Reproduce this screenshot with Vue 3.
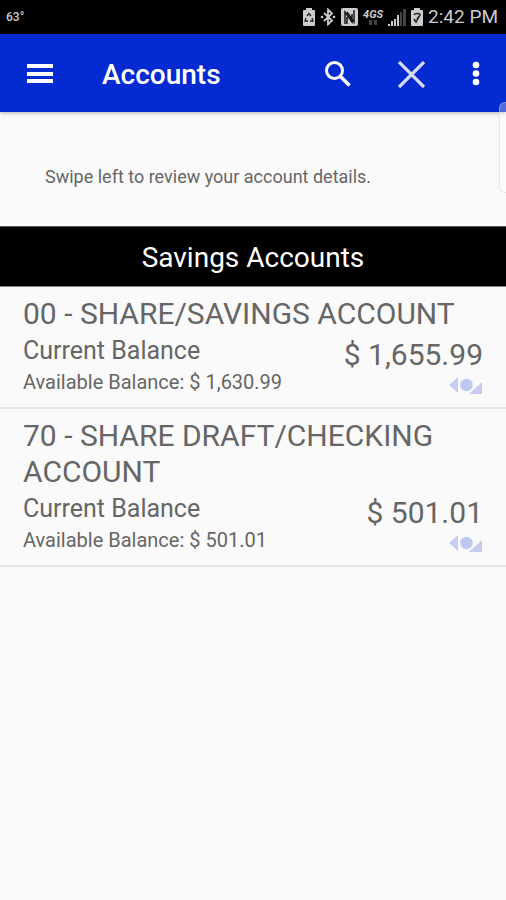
<template>
  <div class="screen">
    <!-- system status bar -->
    <div class="status-bar">
      <span class="temperature">63°</span>
      <div class="status-icons">
        <svg width="12" height="18" viewBox="0 0 12 18">
          <path fill="#ccc" d="M3 2V0h6v2h2a1 1 0 0 1 1 1v14a1 1 0 0 1-1 1H1a1 1 0 0 1-1-1V3a1 1 0 0 1 1-1z" />
          <path fill="none" stroke="#222" stroke-width="1.300" d="M4 8l2-2.500L8 8M3 10l-1 3h3M9 10l1 3H7" />
        </svg>
        <svg width="16" height="18" viewBox="0 0 16 18">
          <path fill="none" stroke="#ccc" stroke-width="1.800" d="M4 5l8 7.500L8 16.500V1.500l4 4L4 13" />
          <circle cx="2" cy="9" r="1.300" fill="#ccc" />
          <circle cx="14" cy="9" r="1.300" fill="#ccc" />
        </svg>
        <svg width="17" height="18" viewBox="0 0 17 18">
          <rect width="17" height="18" rx="2" fill="#ccc" />
          <path fill="none" stroke="#111" stroke-width="1.400" d="M4 16V4l7 10V6M13 2v12L6 4M6 9v7" />
        </svg>
        <div class="network">
          <span class="network-type">4GS</span>
          <svg width="10" height="5" viewBox="0 0 10 5">
            <path fill="#444" d="M1 0h3v5H1zM6 0h3v5H6z" />
          </svg>
        </div>
        <svg width="18" height="18" viewBox="0 0 18 18">
          <path fill="#ccc" d="M0 16h2v2H0zM3 13h2v5H3zM6 11h2v7H6zM9 7h2v11H9z" />
          <path fill="#444" d="M12 4h2v14h-2zM15 1h3v17h-3z" />
        </svg>
        <svg width="12" height="18" viewBox="0 0 12 18">
          <path fill="#ccc" d="M3 2V0h6v2h2a1 1 0 0 1 1 1v14a1 1 0 0 1-1 1H1a1 1 0 0 1-1-1V3a1 1 0 0 1 1-1z" />
          <path fill="none" stroke="#222" stroke-width="1.500" d="M3 7c1-2 6-2 6 0 0 1-1 1-3 4M3 11l2 3 4-7" />
        </svg>
      </div>
      <time class="clock">2:42 PM</time>
    </div>

    <header class="app-bar">
      <button class="icon-btn" aria-label="Menu">
        <svg width="28" height="28" viewBox="0 0 28 28">
          <path fill="currentColor" d="M1 3h26v4H1zM1 11h26v4H1zM1 18h26v4H1z" />
        </svg>
      </button>
      <h1 class="app-title">Accounts</h1>
      <div class="actions">
        <button class="icon-btn" aria-label="Search">
          <svg width="28" height="28" viewBox="0 0 28 28">
            <g fill="none" stroke="currentColor" stroke-width="3">
              <circle cx="10.500" cy="9.500" r="8" />
              <path d="M16 15l9.500 9.500" stroke-width="3.600" />
            </g>
          </svg>
        </button>
        <button class="icon-btn close" aria-label="Close">
          <svg width="28" height="28" viewBox="0 0 28 28">
            <path fill="none" stroke="currentColor" stroke-width="3.200" d="M1 1l25 25M26 1L1 26" />
          </svg>
        </button>
        <button class="icon-btn" aria-label="More options">
          <svg width="8" height="28" viewBox="0 0 8 28">
            <g fill="currentColor">
              <circle cx="4" cy="4" r="3.300" />
              <circle cx="4" cy="12.500" r="3.300" />
              <circle cx="4" cy="21" r="3.300" />
            </g>
          </svg>
        </button>
      </div>
      <div class="edge-handle"></div>
    </header>

    <main>
      <p class="hint">Swipe left to review your account details.</p>
      <h2 class="group-title">Savings Accounts</h2>
      <ul class="accounts">
        <li v-for="account in accounts" :key="account.id" class="account">
          <h3 class="account-name">{{ account.id }} - {{ account.name }}</h3>
          <div class="account-body">
            <div>
              <p class="label">Current Balance</p>
              <p class="available">Available Balance: {{ account.available }}</p>
            </div>
            <div class="amount">
              <p class="balance">{{ account.balance }}</p>
              <svg width="34" height="18" viewBox="0 1 34 18">
                <path fill="#c5cbf1" d="M0 9L9 1v16z" />
                <circle cx="17.500" cy="9" r="6.200" fill="#bfc8f3" />
                <path fill="#c5cbf1" d="M33 6v12H20z" />
              </svg>
            </div>
          </div>
        </li>
      </ul>
    </main>
  </div>
</template>

<script setup>
import { ref } from 'vue'

const accounts = ref([
  {
    id: '00',
    name: 'SHARE/SAVINGS ACCOUNT',
    balance: '$ 1,655.99',
    available: '$ 1,630.99'
  },
  {
    id: '70',
    name: 'SHARE DRAFT/CHECKING ACCOUNT',
    balance: '$ 501.01',
    available: '$ 501.01'
  }
])
</script>

<style>
body {
  margin: 0;
  background: #fafafa;
}
</style>

<style scoped>
.screen {
  min-height: 100vh;
  background: #fafafa;
  color: #666;
  font-family: Roboto, "Liberation Sans", sans-serif;
}

h1,
h2,
h3,
p,
ul {
  margin: 0;
  padding: 0;
  font-weight: 400;
}

.status-bar {
  display: flex;
  align-items: center;
  height: 34px;
  padding: 0 8px 0 6px;
  background: #000;
  color: #ccc;
}

.temperature {
  font-size: 12px;
  font-weight: 500;
}

.status-icons {
  display: flex;
  align-items: center;
  gap: 5px;
  margin-left: auto;
}

.network {
  display: flex;
  flex-direction: column;
  align-items: center;
}

.network-type {
  font-size: 11px;
  line-height: 10px;
  font-weight: 700;
  font-style: italic;
}

.clock {
  margin-left: 5px;
  font-size: 19px;
  line-height: 36px;
}

.app-bar {
  position: relative;
  display: flex;
  align-items: center;
  box-sizing: border-box;
  height: 78px;
  padding: 4px 26px 0;
  background: #042bd1;
  color: #fff;
  box-shadow: 0 1px 4px rgba(0, 0, 0, 0.3);
}

.icon-btn {
  display: flex;
  padding: 0;
  border: none;
  background: transparent;
  color: inherit;
  cursor: pointer;
}

.app-title {
  margin-left: 48px;
  font-size: 28px;
  line-height: 36px;
  font-weight: 500;
}

.actions {
  display: flex;
  align-items: center;
  gap: 46px;
  margin-left: auto;
}

.close {
  color: #d3dafa;
}

/* edge panel handle lies over the bar and the page */
.edge-handle {
  position: absolute;
  top: 68px;
  right: 0;
  width: 6px;
  height: 89px;
  border: 1px solid rgba(200, 200, 200, 0.4);
  border-right: none;
  border-radius: 6px 0 0 6px;
  background: rgba(255, 255, 255, 0.3);
}

.hint {
  padding: 52px 45px 36px;
  font-size: 18px;
  line-height: 26px;
}

.group-title {
  padding-top: 2px;
  border-top: 1px solid #555;
  border-bottom: 1px solid #888;
  background: #000;
  color: #fff;
  font-size: 28px;
  line-height: 57px;
  text-align: center;
}

.accounts {
  list-style: none;
}

.account {
  padding: 9px 23px 12px;
  border-bottom: 2px solid #e8e8e8;
}

.account-name {
  font-size: 30px;
  line-height: 36px;
}

.account-body {
  display: flex;
  justify-content: space-between;
}

.label {
  font-size: 25px;
  line-height: 38px;
}

.available {
  font-size: 20px;
  line-height: 24px;
}

.amount {
  display: flex;
  flex-direction: column;
  align-items: flex-end;
}

.balance {
  font-size: 30px;
  line-height: 45px;
}
</style>
